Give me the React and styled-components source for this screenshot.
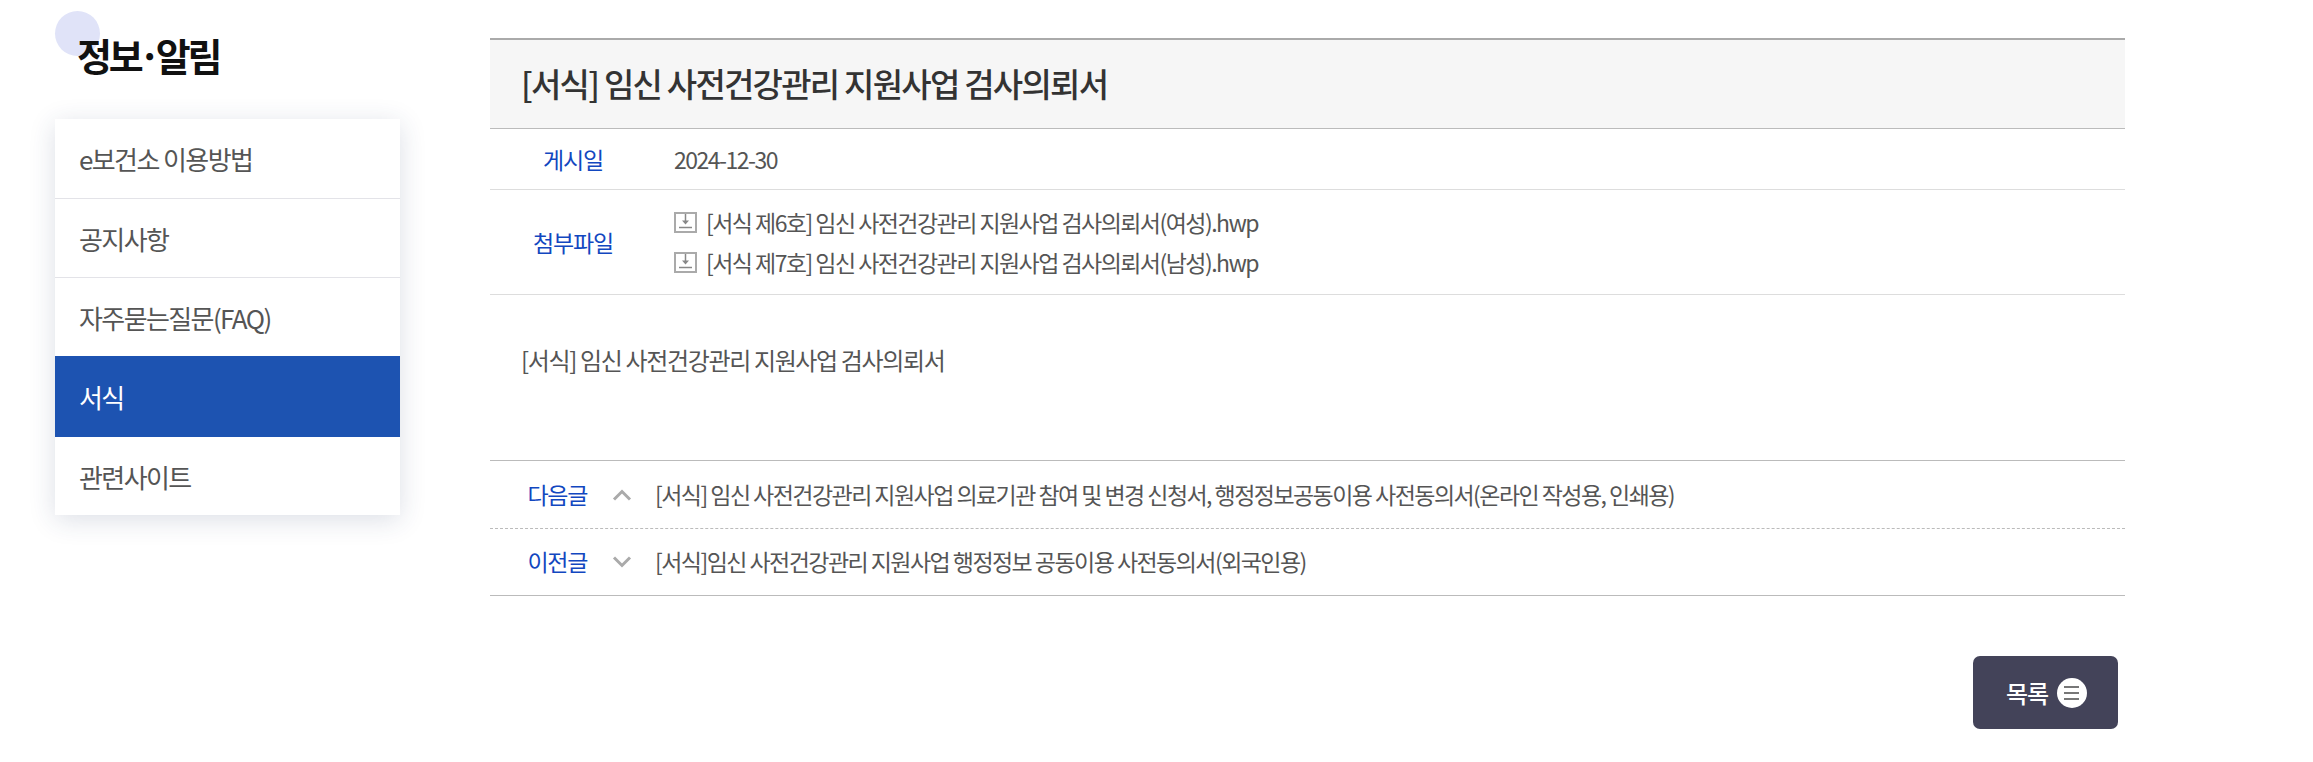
import React from 'react';
import styled, {createGlobalStyle} from 'styled-components';

const Global = createGlobalStyle`
  html, body {
    margin: 0;
    padding: 0;
    background: #fff;
    overflow: hidden;
  }
  body {
    font-family: "Noto Sans CJK KR", "Noto Sans", sans-serif;
    color: #555;
  }
  * {
    box-sizing: border-box;
  }
`;

const Page = styled.div`
  display: flex;
  align-items: flex-start;
  width: 2313px;
  height: 762px;
  padding-left: 55px;
`;

const Side = styled.aside`
  width: 345px;
  flex: none;
  margin-right: 90px;
`;

const SideTitle = styled.h2`
  position: relative;
  margin: 0;
  height: 119px;
  padding: 29px 0 0 22px;
  font-size: 38px;
  line-height: 52px;
  font-weight: 700;
  letter-spacing: -3.2px;
  color: #111;

  &::before {
    content: '';
    position: absolute;
    left: 0;
    top: 11px;
    width: 45px;
    height: 45px;
    border-radius: 50%;
    background: #e0e3f8;
  }

  span {
    position: relative;
  }
`;

const TitleDot = styled.b`
  margin: 0 -2px;
  font-weight: 700;
`;

const Menu = styled.ul`
  list-style: none;
  margin: 0;
  padding: 0;
  background: #fff;
  box-shadow: 0 5px 25px rgba(40, 55, 100, 0.16);
`;

const MenuItem = styled.li`
  height: ${({$h}) => $h}px;
  padding-left: 24px;
  display: flex;
  align-items: center;
  font-size: 26px;
  letter-spacing: -1.6px;
  color: ${({$active}) => ($active ? '#fff' : '#555')};
  background: ${({$active}) => ($active ? '#1d53b1' : '#fff')};
  border-bottom: ${({$line}) => ($line ? '1px solid #e3e3e8' : 'none')};
`;

const Main = styled.main`
  width: 1635px;
  flex: none;
  padding-top: 38px;
`;

const TitleBar = styled.div`
  height: 91px;
  padding: 0 0 3px 31px;
  display: flex;
  align-items: center;
  background: #f6f6f6;
  border-top: 2px solid #aaa;
  border-bottom: 1px solid #bbb;
`;

const Title = styled.h1`
  margin: 0;
  font-size: 33px;
  font-weight: 500;
  letter-spacing: -1.75px;
  color: #333;
`;

const InfoRow = styled.div`
  display: flex;
  align-items: center;
  height: ${({$h}) => $h}px;
  border-bottom: 1px solid #ddd;
`;

const Label = styled.div`
  width: 166px;
  margin-right: 18px;
  flex: none;
  text-align: center;
  font-size: 23px;
  letter-spacing: -1.2px;
  color: #1247c0;
`;

const Value = styled.div`
  font-size: 23px;
  letter-spacing: -1.5px;
  color: #555;
`;

const FileList = styled.div`
  display: flex;
  flex-direction: column;
`;

const FileLink = styled.a`
  display: flex;
  align-items: center;
  gap: 8px;
  height: 40px;
  font-size: 23px;
  letter-spacing: -1.55px;
  color: #555;
`;

const Body = styled.div`
  height: 165px;
  padding: 47px 31px 0;
  font-size: 24px;
  line-height: 36px;
  letter-spacing: -1.35px;
  color: #555;
`;

const Nav = styled.div`
  border-top: 1px solid #bbb;
  border-bottom: 1px solid #bbb;
`;

const NavRow = styled.div`
  display: flex;
  align-items: center;
  height: 67px;
  padding-bottom: 2px;
  border-top: ${({$dashed}) => ($dashed ? '1px dashed #bbb' : 'none')};
`;

const NavLabel = styled.div`
  width: 97px;
  flex: none;
  text-align: right;
  font-size: 23px;
  letter-spacing: -1.3px;
  color: #1247c0;
`;

const Arrow = styled.svg`
  width: 20px;
  height: 12px;
  margin: 2px 23px 0 25px;
  flex: none;
`;

const NavText = styled.div`
  font-size: 23px;
  letter-spacing: -1.55px;
  color: #555;
`;

const Actions = styled.div`
  display: flex;
  justify-content: flex-end;
  padding: 60px 7px 0 0;
`;

const ListButton = styled.button`
  display: flex;
  align-items: center;
  justify-content: center;
  gap: 9px;
  width: 145px;
  height: 73px;
  padding: 0 0 0 2px;
  border: 0;
  border-radius: 7px;
  background: #434359;
  color: #fff;
  font-family: inherit;
  font-size: 24px;
  font-weight: 500;
  letter-spacing: -1.2px;
`;

const MenuDot = styled.span`
  width: 30px;
  height: 30px;
  border-radius: 50%;
  background: #fff;
  display: flex;
  flex-direction: column;
  align-items: center;
  justify-content: center;
  gap: 4px;

  i {
    display: block;
    width: 15px;
    height: 2px;
    background: #777;
  }
`;

const FileIcon = () => (
    <svg width="24" height="21" viewBox="0 0 24 21" fill="none">
        <rect x="1" y="1" width="21" height="19" stroke="#aaa" strokeWidth="2" fill="#fff"/>
        <path d="M11.5 2v7" stroke="#888" strokeWidth="1.5"/>
        <path d="M8 8.5h7l-3.5 4z" fill="#888"/>
        <path d="M5 15.5h13" stroke="#888" strokeWidth="1.5"/>
    </svg>
);

const menu = [
    {name: 'e보건소 이용방법', h: 80, line: true},
    {name: '공지사항', h: 79, line: true},
    {name: '자주묻는질문(FAQ)', h: 78},
    {name: '서식', h: 81, active: true},
    {name: '관련사이트', h: 78},
];

const files = [
    '[서식 제6호] 임신 사전건강관리 지원사업 검사의뢰서(여성).hwp',
    '[서식 제7호] 임신 사전건강관리 지원사업 검사의뢰서(남성).hwp',
];

const App = () => {
    return (
        <Page>
            <Global/>
            <Side>
                <SideTitle><span>정보<TitleDot>·</TitleDot>알림</span></SideTitle>
                <Menu>
                    {menu.map((m) => (
                        <MenuItem key={m.name} $h={m.h} $active={m.active} $line={m.line}>{m.name}</MenuItem>
                    ))}
                </Menu>
            </Side>
            <Main>
                <TitleBar>
                    <Title>[서식] 임신 사전건강관리 지원사업 검사의뢰서</Title>
                </TitleBar>
                <InfoRow $h={61}>
                    <Label>게시일</Label>
                    <Value>2024-12-30</Value>
                </InfoRow>
                <InfoRow $h={105}>
                    <Label>첨부파일</Label>
                    <FileList>
                        {files.map((f) => (
                            <FileLink key={f}><FileIcon/>{f}</FileLink>
                        ))}
                    </FileList>
                </InfoRow>
                <Body>[서식] 임신 사전건강관리 지원사업 검사의뢰서</Body>
                <Nav>
                    <NavRow>
                        <NavLabel>다음글</NavLabel>
                        <Arrow viewBox="0 0 20 12" fill="none">
                            <path d="M2 10.5 10 2.5l8 8" stroke="#aaa" strokeWidth="3"/>
                        </Arrow>
                        <NavText>[서식] 임신 사전건강관리 지원사업 의료기관 참여 및 변경 신청서, 행정정보공동이용 사전동의서(온라인 작성용, 인쇄용)</NavText>
                    </NavRow>
                    <NavRow $dashed>
                        <NavLabel>이전글</NavLabel>
                        <Arrow viewBox="0 0 20 12" fill="none">
                            <path d="M2 1.5l8 8 8-8" stroke="#aaa" strokeWidth="3"/>
                        </Arrow>
                        <NavText>[서식]임신 사전건강관리 지원사업 행정정보 공동이용 사전동의서(외국인용)</NavText>
                    </NavRow>
                </Nav>
                <Actions>
                    <ListButton>목록<MenuDot><i/><i/><i/></MenuDot></ListButton>
                </Actions>
            </Main>
        </Page>
    );
};

export default App;
